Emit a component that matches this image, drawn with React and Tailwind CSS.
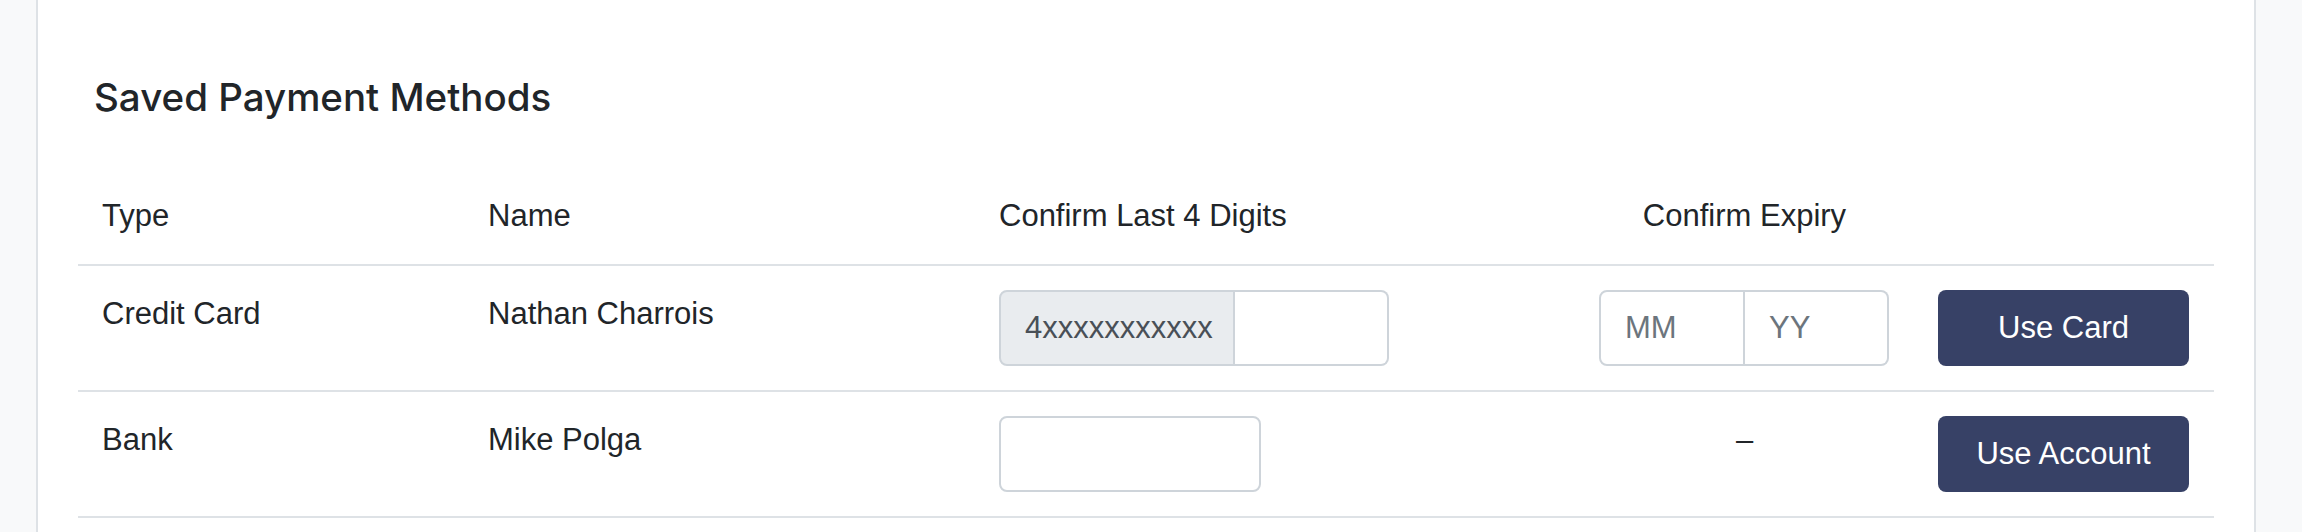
const methods = [
  { type: 'Credit Card', name: 'Nathan Charrois', masked: '4xxxxxxxxxxx', action: 'Use Card', card: true },
  { type: 'Bank', name: 'Mike Polga', action: 'Use Account', card: false },
]

function LastFour({ masked }) {
  if (!masked) {
    return (
      <input
        type="text"
        className="h-[76px] w-[262px] rounded-lg border-2 border-[#ced4da] bg-white px-6 outline-none"
      />
    )
  }
  return (
    <div className="flex h-[76px]">
      <span className="flex w-[236px] items-center rounded-l-lg border-2 border-[#ced4da] bg-[#e9ecef] px-6 text-[#495057]">
        {masked}
      </span>
      <input
        type="text"
        className="h-full w-[154px] rounded-r-lg border-2 border-l-0 border-[#ced4da] bg-white px-6 outline-none"
      />
    </div>
  )
}

function Expiry() {
  return (
    <div className="flex h-[76px]">
      <input
        type="text"
        placeholder="MM"
        className="h-full w-[146px] rounded-l-lg border-2 border-[#ced4da] bg-white px-6 outline-none placeholder:text-[#6c757d]"
      />
      <input
        type="text"
        placeholder="YY"
        className="h-full w-[144px] rounded-r-lg border-2 border-l-0 border-[#ced4da] bg-white px-6 outline-none placeholder:text-[#6c757d]"
      />
    </div>
  )
}

export default function App() {
  return (
    <div
      className="h-[532px] overflow-hidden bg-[#f8f9fa] text-[#212529]"
      style={{ fontFamily: '"Liberation Sans", Arial, sans-serif' }}
    >
      <div className="ml-[36px] h-full w-[2220px] border-x-2 border-[#dee2e6] bg-white px-10 pt-[73px]">
        <h4
          className="mb-[47px] pl-4 text-[38.5px] leading-[48px] font-medium"
          style={{ fontFamily: 'Inter, "Liberation Sans", sans-serif' }}
        >
          Saved Payment Methods
        </h4>

        <table className="w-[2136px] table-fixed border-collapse text-[31px] leading-[48px]">
          <colgroup>
            <col className="w-[386px]" />
            <col className="w-[511px]" />
            <col className="w-[600px]" />
            <col className="w-[339px]" />
            <col className="w-[300px]" />
          </colgroup>
          <thead>
            <tr className="border-b-2 border-[#dee2e6]">
              <th className="p-6 text-left align-top font-normal">Type</th>
              <th className="p-6 text-left align-top font-normal">Name</th>
              <th className="p-6 text-left align-top font-normal">Confirm Last 4 Digits</th>
              <th className="p-6 text-center align-top font-normal">Confirm Expiry</th>
              <th className="p-6"></th>
            </tr>
          </thead>
          <tbody>
            {methods.map((m) => (
              <tr key={m.type} className="border-b-2 border-[#dee2e6]">
                <td className="p-6 align-top">{m.type}</td>
                <td className="p-6 align-top">{m.name}</td>
                <td className="p-6 align-top">
                  <LastFour masked={m.masked} />
                </td>
                <td className="p-6 text-center align-top">
                  {m.card ? <Expiry /> : <span>–</span>}
                </td>
                <td className="p-6 align-top">
                  <button className="h-[76px] w-[251px] rounded-lg bg-[#374166] text-white">
                    {m.action}
                  </button>
                </td>
              </tr>
            ))}
          </tbody>
        </table>
      </div>
    </div>
  )
}
